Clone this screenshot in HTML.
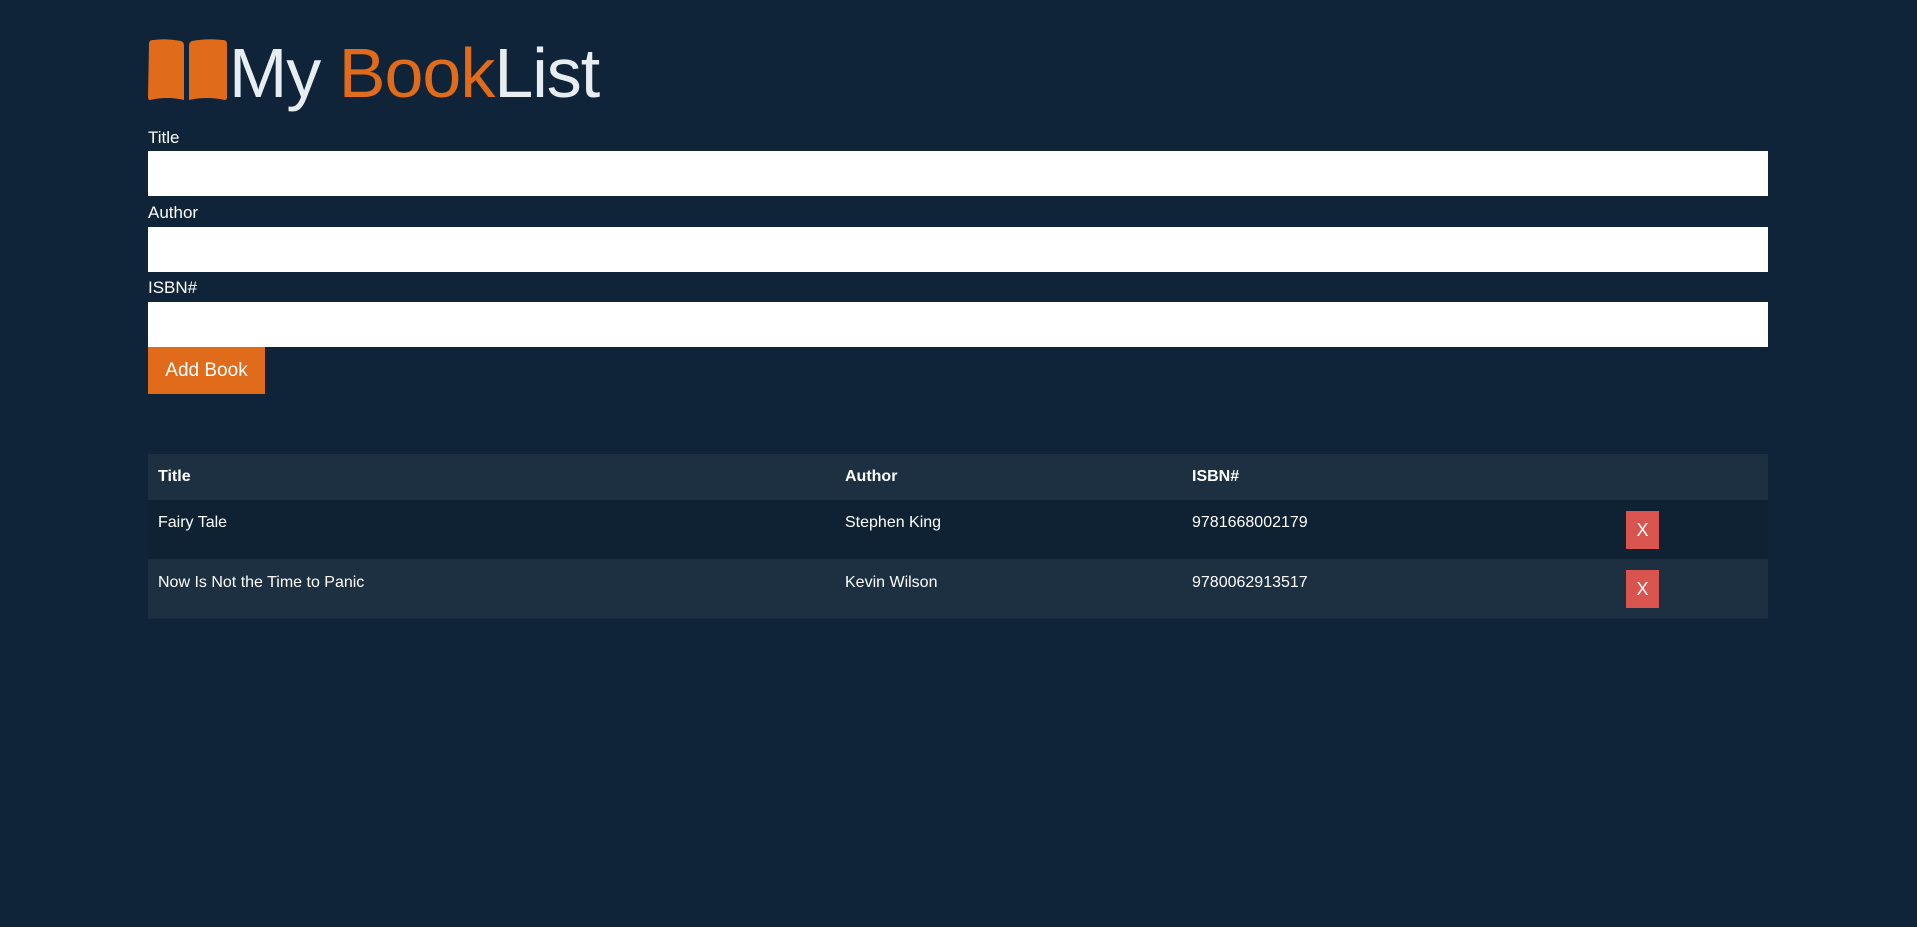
<!DOCTYPE html>
<html><head><meta charset="utf-8"><style>
*{box-sizing:border-box;margin:0;padding:0}
body{width:1917px;height:927px;background:#0f2439;font-family:"Liberation Sans",sans-serif;color:#fff;position:relative;overflow:hidden}
.a{position:absolute}
.lbl{font-size:17px;left:148px}
.inp{left:148px;width:1620px;height:45px;background:#fff}
.logo{left:229px;top:28px;font-size:70px;font-weight:300;letter-spacing:-1px;color:#e8edf2;line-height:90px}
.logo span{color:#e06b1a}
.row{left:148px;width:1620px;font-size:16px}
.row div{position:absolute}
.x{width:33px;height:38px;background:#d9534f;color:#fff;font-size:18px;text-align:center;line-height:38px}
</style></head><body>
<svg class="a" style="left:147px;top:38px" width="82" height="64" viewBox="0 0 82 64">
<path d="M2 6 Q2 2 6 2 Q20 0 34 3 Q37 4 37 8 L37 62 Q20 58 3 62 Q1 62 1 59 Z" fill="#e06b1a"/>
<path d="M42 8 Q42 4 45 3 Q60 0 76 2 Q80 2 80 6 L80 59 Q80 62 78 62 Q60 58 42 62 Z" fill="#e06b1a"/>
</svg>
<div class="a logo">My <span>Book</span>List</div>
<div class="a lbl" style="top:128px">Title</div>
<div class="a inp" style="top:151px"></div>
<div class="a lbl" style="top:203px">Author</div>
<div class="a inp" style="top:227px"></div>
<div class="a lbl" style="top:278px">ISBN#</div>
<div class="a inp" style="top:302px"></div>
<div class="a" style="left:148px;top:347px;width:117px;height:47px;background:#e06b1a;font-size:19px;line-height:47px;text-align:center">Add Book</div>
<div class="a row" style="top:454px;height:46px;background:#1c3042;font-weight:bold">
<div style="left:10px;top:14px">Title</div><div style="left:697px;top:14px">Author</div><div style="left:1044px;top:14px">ISBN#</div></div>
<div class="a row" style="top:500px;height:60px;background:#0f2234;border-bottom:1px solid #1a2c3e">
<div style="left:10px;top:14px">Fairy Tale</div><div style="left:697px;top:14px">Stephen King</div><div style="left:1044px;top:14px">9781668002179</div>
<div class="x" style="left:1478px;top:11px">X</div></div>
<div class="a row" style="top:560px;height:59px;background:#1c3042;border-bottom:1px solid #17293a">
<div style="left:10px;top:14px">Now Is Not the Time to Panic</div><div style="left:697px;top:14px">Kevin Wilson</div><div style="left:1044px;top:14px">9780062913517</div>
<div class="x" style="left:1478px;top:10px">X</div></div>
</body></html>
